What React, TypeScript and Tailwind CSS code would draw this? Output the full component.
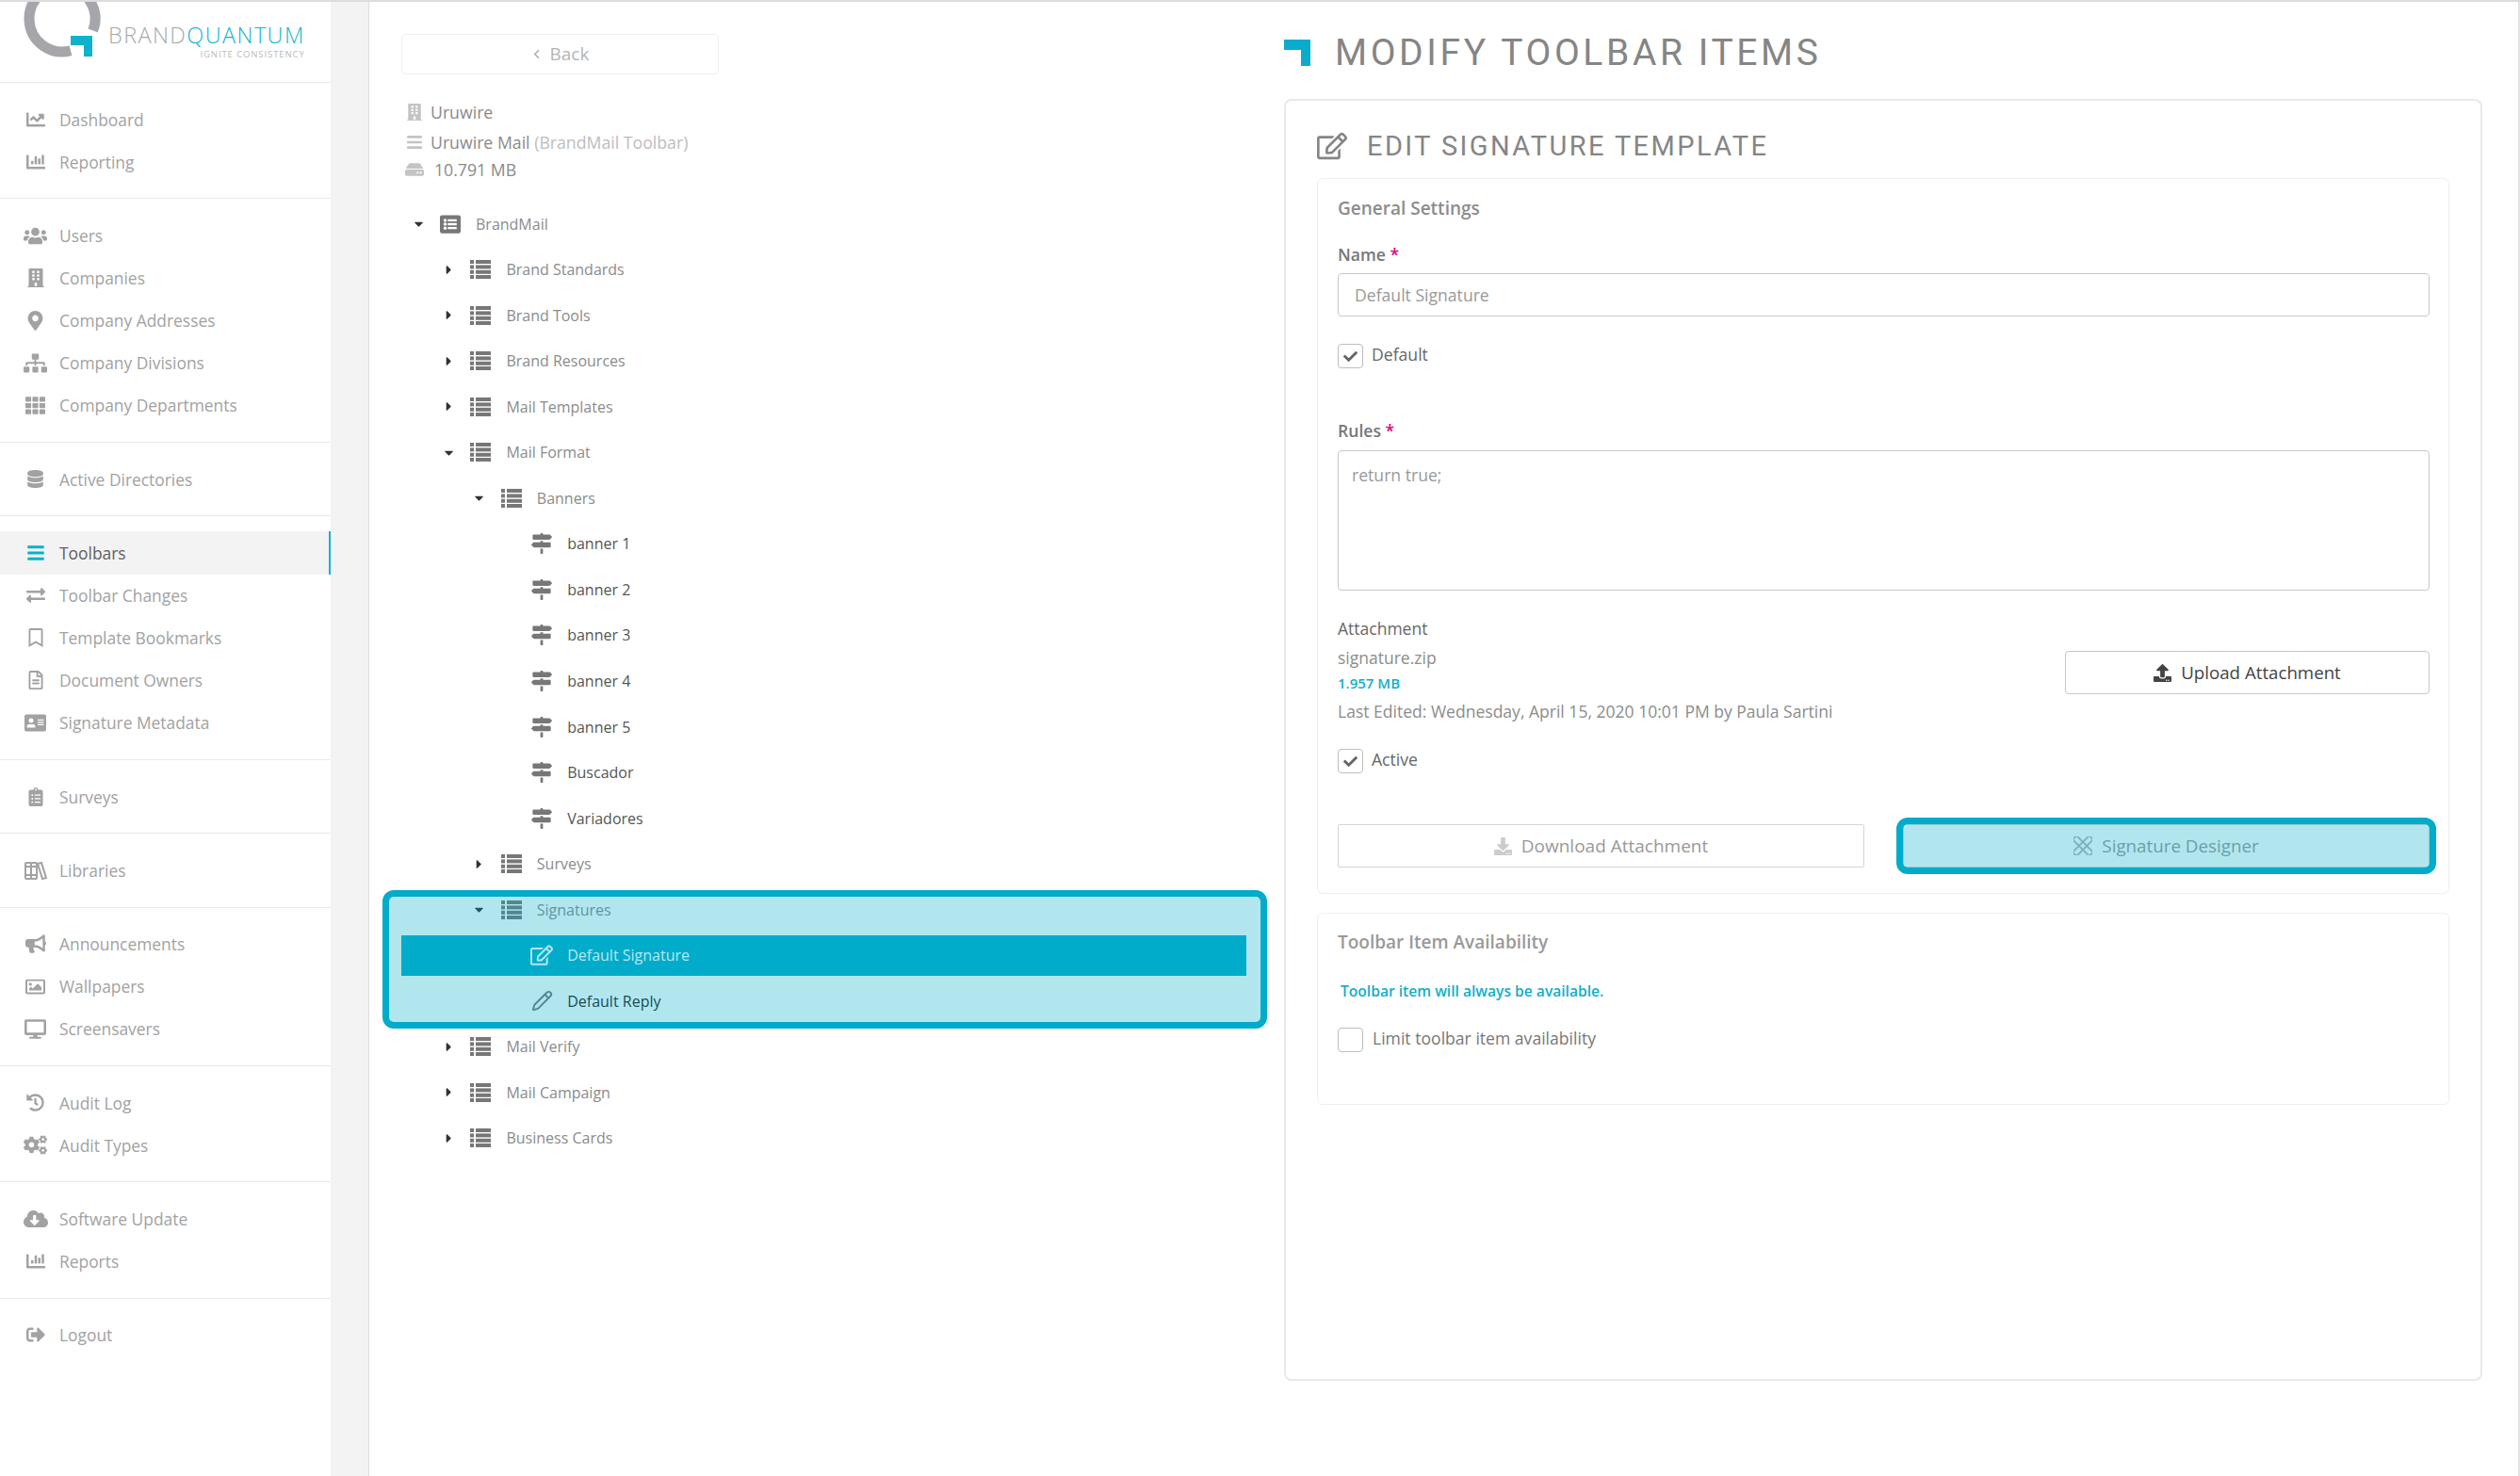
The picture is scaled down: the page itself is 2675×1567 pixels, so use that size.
import type { ReactNode } from "react";
import {
  FaAddressCard,
  FaBars,
  FaBuilding,
  FaBullhorn,
  FaCaretDown,
  FaCaretRight,
  FaChartBar,
  FaChartLine,
  FaCheck,
  FaChevronLeft,
  FaClipboardList,
  FaCloudDownloadAlt,
  FaCogs,
  FaDatabase,
  FaDesktop,
  FaDownload,
  FaExchangeAlt,
  FaHdd,
  FaHistory,
  FaListAlt,
  FaMapMarkerAlt,
  FaMapSigns,
  FaRegBookmark,
  FaRegEdit,
  FaRegFileAlt,
  FaRegImage,
  FaSignOutAlt,
  FaSitemap,
  FaTh,
  FaUpload,
  FaUsers,
} from "react-icons/fa";
import { LuPencil } from "react-icons/lu";

function BooksIcon() {
  return (
    <svg viewBox="0 0 24 20" className="w-[24px] h-[20px]" fill="none" stroke="currentColor" strokeWidth="2">
      <rect x="1" y="2" width="6" height="17" rx="1" />
      <rect x="7" y="2" width="6" height="17" rx="1" />
      <path d="M1 6h12M1 15h12" />
      <path d="M14 3l4-1 5 16-4 1z" />
    </svg>
  );
}

// dense list glyph, the package one has thinner bars
function ListIcon() {
  return (
    <svg viewBox="0 0 22 20" className="w-[22px] h-[20px]" fill="currentColor">
      <rect x="0" y="0" width="4" height="4" />
      <rect x="6" y="0" width="16" height="4" />
      <rect x="0" y="5.4" width="4" height="4" />
      <rect x="6" y="5.4" width="16" height="4" />
      <rect x="0" y="10.8" width="4" height="4" />
      <rect x="6" y="10.8" width="16" height="4" />
      <rect x="0" y="16" width="4" height="4" />
      <rect x="6" y="16" width="16" height="4" />
    </svg>
  );
}

function DesignerIcon() {
  return (
    <svg viewBox="0 0 20 20" className="w-[20px] h-[20px]" fill="none" stroke="currentColor" strokeWidth="1.8">
      <rect x="-2.5" y="7" width="25" height="6" rx="1" transform="rotate(45 10 10)" />
      <rect x="-2.5" y="7" width="25" height="6" rx="1" transform="rotate(-45 10 10)" />
    </svg>
  );
}

function Logo() {
  return (
    <div className="h-[85px] flex overflow-hidden">
      <svg viewBox="0 0 90 88" className="w-[90px] h-[88px] ml-[20px] -mt-[2px] shrink-0">
        <path d="M55 53.8 A35 35 0 1 1 78.7 32.5" fill="none" stroke="#a6a6aa" strokeWidth="11" />
        <path d="M55 38h23v22h-9v-12h-14z" fill="#0fb2cd" />
      </svg>
      <div className="ml-[5px] pt-[20px]">
        <div className="text-[23.5px] leading-[30px] tracking-[1.4px] font-light whitespace-nowrap text-[#a8a8a8]">
          BRAND<span className="text-[#12b3cf]">QUANTUM</span>
        </div>
        <div className="text-[9.5px] leading-[12px] tracking-[0.9px] text-right text-[#bbbbbb] whitespace-nowrap">
          IGNITE CONSISTENCY
        </div>
      </div>
    </div>
  );
}

const navGroups: { label: string; icon: ReactNode; active?: boolean }[][] = [
  [
    { label: "Dashboard", icon: <FaChartLine size={20} /> },
    { label: "Reporting", icon: <FaChartBar size={20} /> },
  ],
  [
    { label: "Users", icon: <FaUsers size={25} /> },
    { label: "Companies", icon: <FaBuilding size={20} /> },
    { label: "Company Addresses", icon: <FaMapMarkerAlt size={21} /> },
    { label: "Company Divisions", icon: <FaSitemap size={25} /> },
    { label: "Company Departments", icon: <FaTh size={21} /> },
  ],
  [{ label: "Active Directories", icon: <FaDatabase size={19} /> }],
  [
    { label: "Toolbars", icon: <FaBars size={20} />, active: true },
    { label: "Toolbar Changes", icon: <FaExchangeAlt size={20} /> },
    { label: "Template Bookmarks", icon: <FaRegBookmark size={20} /> },
    { label: "Document Owners", icon: <FaRegFileAlt size={20} /> },
    { label: "Signature Metadata", icon: <FaAddressCard size={23} /> },
  ],
  [{ label: "Surveys", icon: <FaClipboardList size={20} /> }],
  [{ label: "Libraries", icon: <BooksIcon /> }],
  [
    { label: "Announcements", icon: <FaBullhorn size={22} /> },
    { label: "Wallpapers", icon: <FaRegImage size={21} /> },
    { label: "Screensavers", icon: <FaDesktop size={23} /> },
  ],
  [
    { label: "Audit Log", icon: <FaHistory size={19} /> },
    { label: "Audit Types", icon: <FaCogs size={25} /> },
  ],
  [
    { label: "Software Update", icon: <FaCloudDownloadAlt size={26} /> },
    { label: "Reports", icon: <FaChartBar size={20} /> },
  ],
  [{ label: "Logout", icon: <FaSignOutAlt size={20} /> }],
];

function Sidebar() {
  return (
    <aside className="w-[351px] shrink-0 bg-white">
      <Logo />
      {navGroups.map((group, i) => (
        <div key={i} className="border-t border-[#e9e9e9] py-[16.1px]">
          {group.map((item) => (
            <div
              key={item.label}
              className={
                item.active
                  ? "h-[45.1px] flex items-center bg-[#f3f3f3] border-r-2 border-[#12b3cf] text-[#5f5f5f]"
                  : "h-[45.1px] flex items-center text-[#a2a2a2]"
              }
            >
              <span
                className={
                  item.active
                    ? "w-[27px] ml-[24px] flex justify-center text-[#05b2cc]"
                    : "w-[27px] ml-[24px] flex justify-center"
                }
              >
                {item.icon}
              </span>
              <span className="ml-[12px] text-[17.4px] whitespace-nowrap">{item.label}</span>
            </div>
          ))}
        </div>
      ))}
    </aside>
  );
}

type TreeRow = { label: string; level: 0 | 1 | 2 | 3; caret?: "right" | "down"; icon?: "root" | "sign" };

const rowsBefore: TreeRow[] = [
  { label: "BrandMail", level: 0, caret: "down", icon: "root" },
  { label: "Brand Standards", level: 1, caret: "right" },
  { label: "Brand Tools", level: 1, caret: "right" },
  { label: "Brand Resources", level: 1, caret: "right" },
  { label: "Mail Templates", level: 1, caret: "right" },
  { label: "Mail Format", level: 1, caret: "down" },
  { label: "Banners", level: 2, caret: "down" },
  { label: "banner 1", level: 3, icon: "sign" },
  { label: "banner 2", level: 3, icon: "sign" },
  { label: "banner 3", level: 3, icon: "sign" },
  { label: "banner 4", level: 3, icon: "sign" },
  { label: "banner 5", level: 3, icon: "sign" },
  { label: "Buscador", level: 3, icon: "sign" },
  { label: "Variadores", level: 3, icon: "sign" },
  { label: "Surveys", level: 2, caret: "right" },
];

const rowsAfter: TreeRow[] = [
  { label: "Mail Verify", level: 1, caret: "right" },
  { label: "Mail Campaign", level: 1, caret: "right" },
  { label: "Business Cards", level: 1, caret: "right" },
];

const indent = { 0: "pl-0", 1: "pl-[32.4px]", 2: "pl-[64.8px]", 3: "pl-[97.2px]" };

function Row({ row }: { row: TreeRow }) {
  const leaf = row.level === 3;
  return (
    <div className={`h-[43px] mb-[5.55px] flex items-center ${indent[row.level]}`}>
      <span className="w-[36px] flex justify-center text-[#2f3338] shrink-0">
        {row.caret === "right" && <FaCaretRight size={15} />}
        {row.caret === "down" && <FaCaretDown size={15} />}
      </span>
      <span className="w-[22px] ml-[5px] flex justify-center text-[#777777] shrink-0">
        {row.icon === "root" && <FaListAlt size={22} />}
        {row.icon === "sign" && <FaMapSigns size={22} />}
        {!row.icon && <ListIcon />}
      </span>
      <span className={leaf ? "ml-[16px] text-[16px] text-[#555555]" : "ml-[16px] text-[16px] text-[#8b8b8b]"}>
        {row.label}
      </span>
    </div>
  );
}

function Tree() {
  return (
    <section className="w-[897px] ml-[34px] shrink-0 pt-[34px]">
      <div className="h-[43px] border border-[#eeeeee] rounded-[5px] w-[337px] flex items-center justify-center gap-[9px] text-[#b5b5b5]">
        <FaChevronLeft size={11} />
        <span className="text-[19px]">Back</span>
      </div>

      <div className="mt-[24px] h-[32px] flex items-center pl-[6px] text-[#8a8a8a]">
        <span className="text-[#c4c4c4] w-[16px] flex justify-center">
          <FaBuilding size={18} />
        </span>
        <span className="ml-[9px] text-[17.7px]">Uruwire</span>
      </div>
      <div className="h-[32px] flex items-center pl-[6px] text-[#8a8a8a]">
        <span className="text-[#c4c4c4] w-[16px] flex justify-center">
          <FaBars size={18} />
        </span>
        <span className="ml-[9px] text-[17.7px]">
          Uruwire Mail <span className="text-[#bdbdbd]">(BrandMail Toolbar)</span>
        </span>
      </div>
      <div className="h-[26px] flex items-center pl-[4px] text-[#8a8a8a]">
        <span className="text-[#c4c4c4] w-[20px] flex justify-center">
          <FaHdd size={20} />
        </span>
        <span className="ml-[11px] text-[17.7px]">10.791 MB</span>
      </div>

      <div className="mt-[23px]">
        {rowsBefore.map((row) => (
          <Row key={row.label} row={row} />
        ))}

        <div className="relative">
          <div className="h-[43px] mb-[5.55px] flex items-center pl-[64.8px]">
            <span className="w-[36px] flex justify-center text-[#2f3338] shrink-0">
              <FaCaretDown size={15} />
            </span>
            <span className="w-[22px] ml-[5px] flex justify-center text-[#777777] shrink-0">
              <ListIcon />
            </span>
            <span className="ml-[16px] text-[16px] text-[#8b8b8b]">Signatures</span>
          </div>
          <div className="h-[43px] mb-[5.55px] flex items-center pl-[97.2px] bg-[#00acca] text-white">
            <span className="w-[36px] shrink-0" />
            <span className="w-[24px] ml-[4px] flex justify-center shrink-0">
              <FaRegEdit size={24} />
            </span>
            <span className="ml-[15px] text-[16px]">Default Signature</span>
          </div>
          <div className="h-[43px] mb-[5.55px] flex items-center pl-[97.2px]">
            <span className="w-[36px] shrink-0" />
            <span className="w-[24px] ml-[4px] flex justify-center text-[#777777] shrink-0">
              <LuPencil size={23} />
            </span>
            <span className="ml-[15px] text-[16px] text-[#222222]">Default Reply</span>
          </div>
          <div className="absolute -left-[20px] -right-[22px] top-[1px] -bottom-[7.5px] border-[7px] border-[#00acca] bg-[#00acca]/30 rounded-[12px]" />
        </div>

        {rowsAfter.map((row) => (
          <Row key={row.label} row={row} />
        ))}
      </div>
    </section>
  );
}

function Checkbox({ checked }: { checked?: boolean }) {
  return (
    <span className="w-[27px] h-[26px] border border-[#bdbdbd] rounded-[4px] flex items-center justify-center text-[#666666] shrink-0">
      {checked && <FaCheck size={15} />}
    </span>
  );
}

function Required() {
  return <span className="text-[#e6007e] font-semibold"> *</span>;
}

function EditPanel() {
  return (
    <section className="w-[1272px] ml-[40px] shrink-0 pt-[34px]">
      <div className="h-[40px] flex items-center">
        <svg viewBox="0 0 28 28" className="w-[28px] h-[28px] shrink-0">
          <path d="M0 0h28v28h-10v-17h-18z" fill="#0aaccb" />
        </svg>
        <h1 className="ml-[26px] font-['Roboto',sans-serif] text-[39px] leading-none tracking-[3.6px] text-[#858585] whitespace-nowrap">
          MODIFY TOOLBAR ITEMS
        </h1>
      </div>

      <div className="mt-[29px] h-[1361px] border-2 border-[#e9e9e9] rounded-[8px] px-[33px] pt-[28px]">
        <div className="h-[40px] flex items-center text-[#858585]">
          <FaRegEdit size={32} className="shrink-0" />
          <h2 className="ml-[21px] font-['Roboto',sans-serif] text-[29px] leading-none tracking-[2.4px] whitespace-nowrap">
            EDIT SIGNATURE TEMPLATE
          </h2>
        </div>

        <div className="mt-[14px] h-[760px] border border-[#efefef] rounded-[6px] pl-[21px] pr-[20px] pt-[18px]">
          <div className="text-[19px] leading-[26px] font-semibold text-[#8c8c8c]">General Settings</div>

          <label className="block mt-[24px] text-[17.6px] leading-[25px] font-semibold text-[#777777]">
            Name
            <Required />
          </label>
          <div className="mt-[7px] h-[46px] border border-[#c8c8c8] rounded-[4px] flex items-center px-[17px] text-[17.6px] text-[#999999]">
            Default Signature
          </div>

          <div className="mt-[29px] flex items-center gap-[9px] text-[17.6px] text-[#666666]">
            <Checkbox checked />
            <span className="-mt-[3px]">Default</span>
          </div>

          <label className="block mt-[54px] text-[17.6px] leading-[25px] font-semibold text-[#777777]">
            Rules
            <Required />
          </label>
          <div className="mt-[8px] h-[149px] border border-[#c8c8c8] rounded-[4px] px-[14px] py-[13px] text-[17.6px] leading-[25px] text-[#999999]">
            return true;
          </div>

          <div className="mt-[28px] text-[17.5px] leading-[25px] font-medium text-[#666666]">Attachment</div>

          <div className="flex justify-between">
            <div>
              <div className="mt-[6px] text-[17.5px] leading-[25px] text-[#8c8c8c]">signature.zip</div>
              <div className="mt-[2px] text-[15px] leading-[25px] font-semibold text-[#12aecb]">1.957 MB</div>
              <div className="mt-[5px] text-[17.55px] leading-[25px] text-[#8c8c8c]">
                Last Edited: Wednesday, April 15, 2020 10:01 PM by Paula Sartini
              </div>
            </div>
            <div className="w-[387px] h-[46px] mt-[11px] border border-[#c8c8c8] rounded-[4px] flex items-center justify-center gap-[10px] text-[#444444]">
              <FaUpload size={19} />
              <span className="text-[18.7px]">Upload Attachment</span>
            </div>
          </div>

          <div className="mt-[27px] flex items-center gap-[9px] text-[17.6px] text-[#666666]">
            <Checkbox checked />
            <span className="-mt-[3px]">Active</span>
          </div>

          <div className="mt-[54px] flex justify-between">
            <div className="w-[559px] h-[46px] border border-[#d5d5d5] rounded-[2px] flex items-center justify-center gap-[10px] text-[#b5b5b5]">
              <FaDownload size={19} className="text-[#cccccc]" />
              <span className="text-[19px] text-[#999999]">Download Attachment</span>
            </div>
            <div className="relative w-[559px] h-[46px] border border-[#d5d5d5] rounded-[2px] flex items-center justify-center gap-[10px] text-[#999999]">
              <span className="text-[#b5b5b5]">
                <DesignerIcon />
              </span>
              <span className="text-[18.8px]">Signature Designer</span>
              <div className="absolute -left-[8px] -right-[8px] -top-[8px] -bottom-[8px] border-[7px] border-[#00acca] bg-[#00acca]/30 rounded-[12px]" />
            </div>
          </div>
        </div>

        <div className="mt-[20px] h-[204px] border border-[#efefef] rounded-[6px] pl-[21px] pr-[20px] pt-[17px]">
          <div className="text-[19px] leading-[26px] font-semibold text-[#999999]">Toolbar Item Availability</div>
          <div className="mt-[26px] ml-[3px] text-[15.6px] leading-[26px] font-semibold text-[#12aecb]">
            Toolbar item will always be available.
          </div>
          <div className="mt-[26px] flex items-center gap-[10px] text-[17.6px] text-[#777777]">
            <Checkbox />
            <span className="-mt-[3px]">Limit toolbar item availability</span>
          </div>
        </div>
      </div>
    </section>
  );
}

export default function App() {
  return (
    <div className="w-[2675px] h-[1567px] overflow-hidden bg-white flex flex-col font-['Open_Sans',sans-serif]">
      <div className="h-[2px] shrink-0 bg-[#dcdcdc]" />
      <div className="flex-1 flex border-r-2 border-[#e2e2e2] min-h-0">
        <Sidebar />
        <div className="w-[41px] shrink-0 bg-[#f3f3f3] border-r border-[#dddddd]" />
        <main className="flex-1 flex min-w-0">
          <Tree />
          <EditPanel />
        </main>
      </div>
    </div>
  );
}
